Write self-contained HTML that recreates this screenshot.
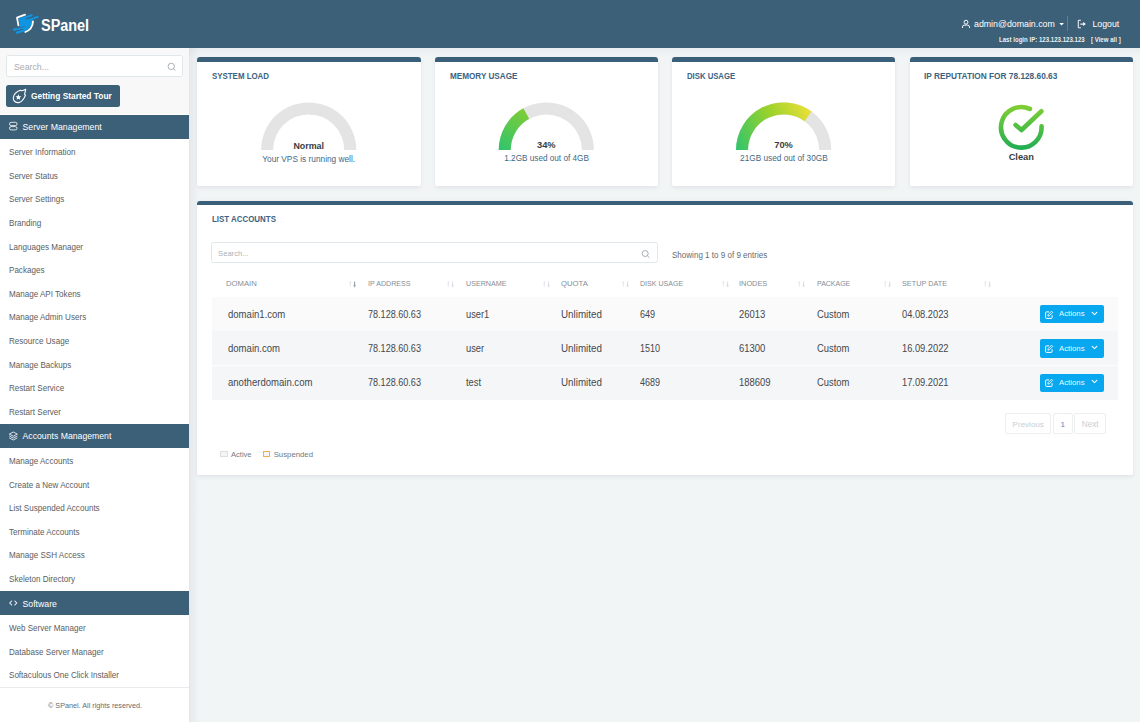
<!DOCTYPE html>
<html><head><meta charset="utf-8">
<style>
*{box-sizing:border-box;margin:0;padding:0}
html,body{width:1140px;height:722px;overflow:hidden}
body{position:relative;background:#f2f5f6;font-family:"Liberation Sans",sans-serif;color:#555}
.a{position:absolute}
.t{position:absolute;line-height:1;white-space:nowrap}
svg{position:absolute;overflow:visible}
</style></head><body>

<div class="a" style="left:189px;top:47.8px;width:951px;height:9px;background:linear-gradient(rgba(0,20,40,.035),rgba(0,20,40,0))"></div>
<div class="a" style="left:0;top:0;width:1140px;height:47.8px;background:#3d6079"></div>
<svg style="left:0;top:0" width="60" height="48" viewBox="0 0 60 48">
<path d="M19 19.5 L25.8 17.2 L26 19.9 L32.8 18.5 L32.4 22 Q30.8 28.5 25.6 30.6 L19.8 27 Z" fill="#0f95e2"/>
<path d="M19.5 19.3 L31.6 15.3" stroke="#0f95e2" stroke-width="2.2" stroke-linecap="round"/>
<path d="M26.5 20 L37.6 17" stroke="#0f95e2" stroke-width="2.2" stroke-linecap="round"/>
<path d="M26 19.2 L33.5 17.3" stroke="#3d6079" stroke-width="0.6"/>
<path d="M14 29.6 L25.3 27" stroke="#0f95e2" stroke-width="2.2" stroke-linecap="round"/>
<path d="M17 32.6 L26 29.9" stroke="#0f95e2" stroke-width="2.2" stroke-linecap="round"/>
<path d="M16.2 28.3 L24.8 26.3" stroke="#3d6079" stroke-width="0.6"/>
<path d="M25.1 14.7 L17 17.6 L18.4 25.4" stroke="#fff" stroke-width="1.8" fill="none" stroke-linecap="round" stroke-linejoin="round"/>
<path d="M33 21.5 Q32.6 29.3 25.3 32" stroke="#fff" stroke-width="1.8" fill="none" stroke-linecap="round"/>
</svg>
<div class="t" style="left:40.60px;top:18.00px;font-size:16.8px;color:#fff;font-weight:bold;transform:scaleX(0.86);transform-origin:0 0">SPanel</div>
<svg style="left:956px;top:14px" width="20" height="20" viewBox="0 0 20 20"><circle cx="10" cy="8.2" r="1.95" stroke="#fff" stroke-width="0.95" fill="none"/><path d="M6.5 13.6 L6.5 12.9 Q6.5 11.1 8.4 11.1 L11.6 11.1 Q13.5 11.1 13.5 12.9 L13.5 13.6" stroke="#fff" stroke-width="0.95" fill="none" stroke-linecap="round"/></svg>
<div class="t" style="left:974.00px;top:20.00px;font-size:8.8px;color:#fff;">admin@domain.com</div>
<svg style="left:1055px;top:14px" width="40" height="20" viewBox="0 0 40 20"><path d="M4.3 8.9 L8.9 8.9 L6.6 11.6 Z" fill="#fff"/><path d="M25.9 6.3 L23.3 6.3 L23.3 13.8 L25.9 13.8" stroke="#fff" stroke-width="0.95" fill="none"/><path d="M25.3 10.1 L28.8 10.1" stroke="#fff" stroke-width="1.1"/><path d="M28.2 8.1 L30.9 10.1 L28.2 12.1 Z" fill="#fff"/></svg>
<div class="a" style="left:1067.1px;top:16.1px;width:1px;height:15.4px;background:rgba(255,255,255,.2)"></div>
<div class="t" style="left:1092.50px;top:20.00px;font-size:8.75px;color:#fff;">Logout</div>
<div class="t" style="left:999.40px;top:37.00px;font-size:6.3px;color:rgba(255,255,255,.92);font-weight:bold;transform:scaleX(0.968);transform-origin:0 0">Last login IP: 123.123.123.123</div>
<div class="t" style="left:1090.60px;top:37.00px;font-size:6.3px;color:rgba(255,255,255,.92);font-weight:bold;transform:scaleX(0.968);transform-origin:0 0">[ View all ]</div>
<div class="a" style="left:0;top:47.8px;width:189.2px;height:674.2px;background:#fff"></div>
<div class="a" style="left:0;top:47.8px;width:189.2px;height:66.7px;background:#f8f8f8"></div>
<div class="a" style="left:189.2px;top:47.8px;width:10px;height:674.2px;background:linear-gradient(90deg,rgba(0,20,40,.065),rgba(0,20,40,.045) 20%,rgba(0,20,40,.02) 70%,rgba(0,20,40,0))"></div>
<div class="a" style="left:6px;top:55.3px;width:177px;height:22.1px;background:#fff;border:1px solid #e1e8ec;border-radius:2.5px"></div>
<div class="t" style="left:14.10px;top:63.00px;font-size:9.3px;color:#a8abb0;transform:scaleX(0.9405);transform-origin:0 0;">Search...</div>
<svg style="left:166px;top:62px" width="11" height="11" viewBox="0 0 11 11">
<circle cx="5.3" cy="4.4" r="3.2" stroke="#a3a8ae" stroke-width="0.9" fill="none"/>
<path d="M7.6 6.7 L9.1 8.3" stroke="#a3a8ae" stroke-width="0.9" stroke-linecap="round"/>
</svg>
<div class="a" style="left:5.9px;top:85.1px;width:113.8px;height:21.5px;background:#3d6079;border-radius:2.5px"></div>
<svg style="left:8px;top:86px" width="22" height="20" viewBox="0 0 22 20"><path d="M17.7 3.3 C 16 4.1 14.9 4.5 13.8 4.7 L 12.2 4.2 C 9 5.4 5.7 8 5.3 11.8 C 5 15.3 7.8 16.7 10.4 16.6 C 12.9 16.5 14.6 14.6 16.1 12 L 17.5 9.3 L 16.6 8.3 Z" stroke="#fff" stroke-width="1.1" fill="none" stroke-linejoin="round"/><path d="M10.40 8.25 L11.19 10.21 L13.30 10.36 L11.68 11.72 L12.19 13.77 L10.40 12.65 L8.61 13.77 L9.12 11.72 L7.50 10.36 L9.61 10.21 Z" fill="#fff"/></svg>
<div class="t" style="left:31.00px;top:92.00px;font-size:8.4px;color:#fff;font-weight:bold;">Getting Started Tour</div>
<div class="a" style="left:0;top:114.5px;width:189.2px;height:24.50px;background:#3d6079"></div>
<div class="t" style="left:22.50px;top:123.00px;font-size:8.75px;color:#fff;">Server Management</div>
<svg style="left:8px;top:121.15px" width="11" height="10" viewBox="0 0 11 10"><rect x="1.5" y="1.3" width="7.5" height="3.3" rx="1.6" stroke="rgba(255,255,255,.85)" stroke-width="0.95" fill="none"/><rect x="1.5" y="5.6" width="7.5" height="3.3" rx="1.6" stroke="rgba(255,255,255,.85)" stroke-width="0.95" fill="none"/></svg>
<div class="a" style="left:0;top:423.8px;width:189.2px;height:24.10px;background:#3d6079"></div>
<div class="t" style="left:22.50px;top:432.00px;font-size:8.7px;color:#fff;">Accounts Management</div>
<svg style="left:8px;top:430.85px" width="11" height="10" viewBox="0 0 11 10"><path d="M5.3 1 L9.3 3.1 L5.3 5.2 L1.3 3.1 Z" stroke="#fff" stroke-width="0.8" fill="none" stroke-linejoin="round"/><path d="M1.3 5 L5.3 7.1 L9.3 5 M1.3 6.9 L5.3 9 L9.3 6.9" stroke="#fff" stroke-width="0.8" fill="none" stroke-linejoin="round"/></svg>
<div class="a" style="left:0;top:590.8px;width:189.2px;height:24.60px;background:#3d6079"></div>
<div class="t" style="left:22.50px;top:600.00px;font-size:8.72px;color:#fff;">Software</div>
<svg style="left:8px;top:598.10px" width="11" height="10" viewBox="0 0 11 10"><path d="M3.7 3 L1.7 5 L3.7 7 M6.8 3 L8.8 5 L6.8 7" stroke="#fff" stroke-width="1.05" fill="none" stroke-linecap="round" stroke-linejoin="round"/></svg>
<div class="t" style="left:8.90px;top:148.00px;font-size:8.65px;color:#5a5e62;transform:scaleX(0.9360);transform-origin:0 0;">Server Information</div>
<div class="t" style="left:8.90px;top:172.00px;font-size:8.65px;color:#5a5e62;transform:scaleX(0.9360);transform-origin:0 0;">Server Status</div>
<div class="t" style="left:8.90px;top:195.00px;font-size:8.65px;color:#5a5e62;transform:scaleX(0.9360);transform-origin:0 0;">Server Settings</div>
<div class="t" style="left:8.90px;top:219.00px;font-size:8.65px;color:#5a5e62;transform:scaleX(0.9360);transform-origin:0 0;">Branding</div>
<div class="t" style="left:8.90px;top:243.00px;font-size:8.65px;color:#5a5e62;transform:scaleX(0.9360);transform-origin:0 0;">Languages Manager</div>
<div class="t" style="left:8.90px;top:266.00px;font-size:8.65px;color:#5a5e62;transform:scaleX(0.9360);transform-origin:0 0;">Packages</div>
<div class="t" style="left:8.90px;top:290.00px;font-size:8.65px;color:#5a5e62;transform:scaleX(0.9360);transform-origin:0 0;">Manage API Tokens</div>
<div class="t" style="left:8.90px;top:313.00px;font-size:8.65px;color:#5a5e62;transform:scaleX(0.9360);transform-origin:0 0;">Manage Admin Users</div>
<div class="t" style="left:8.90px;top:337.00px;font-size:8.65px;color:#5a5e62;transform:scaleX(0.9360);transform-origin:0 0;">Resource Usage</div>
<div class="t" style="left:8.90px;top:361.00px;font-size:8.65px;color:#5a5e62;transform:scaleX(0.9360);transform-origin:0 0;">Manage Backups</div>
<div class="t" style="left:8.90px;top:384.00px;font-size:8.65px;color:#5a5e62;transform:scaleX(0.9360);transform-origin:0 0;">Restart Service</div>
<div class="t" style="left:8.90px;top:408.00px;font-size:8.65px;color:#5a5e62;transform:scaleX(0.9360);transform-origin:0 0;">Restart Server</div>
<div class="t" style="left:8.90px;top:457.00px;font-size:8.65px;color:#5a5e62;transform:scaleX(0.9360);transform-origin:0 0;">Manage Accounts</div>
<div class="t" style="left:8.90px;top:481.00px;font-size:8.65px;color:#5a5e62;transform:scaleX(0.9360);transform-origin:0 0;">Create a New Account</div>
<div class="t" style="left:8.90px;top:504.00px;font-size:8.65px;color:#5a5e62;transform:scaleX(0.9360);transform-origin:0 0;">List Suspended Accounts</div>
<div class="t" style="left:8.90px;top:528.00px;font-size:8.65px;color:#5a5e62;transform:scaleX(0.9360);transform-origin:0 0;">Terminate Accounts</div>
<div class="t" style="left:8.90px;top:551.00px;font-size:8.65px;color:#5a5e62;transform:scaleX(0.9360);transform-origin:0 0;">Manage SSH Access</div>
<div class="t" style="left:8.90px;top:575.00px;font-size:8.65px;color:#5a5e62;transform:scaleX(0.9360);transform-origin:0 0;">Skeleton Directory</div>
<div class="t" style="left:8.90px;top:624.00px;font-size:8.65px;color:#5a5e62;transform:scaleX(0.9360);transform-origin:0 0;">Web Server Manager</div>
<div class="t" style="left:8.90px;top:648.00px;font-size:8.65px;color:#5a5e62;transform:scaleX(0.9360);transform-origin:0 0;">Database Server Manager</div>
<div class="t" style="left:8.90px;top:671.00px;font-size:8.65px;color:#5a5e62;transform:scaleX(0.9360);transform-origin:0 0;">Softaculous One Click Installer</div>
<div class="a" style="left:0;top:686.8px;width:189.2px;height:1px;background:#e8eaee"></div>
<div class="t" style="left:-55.25px;width:300px;text-align:center;top:702.00px;font-size:7.8px;color:#666a6e;transform:scaleX(0.925);transform-origin:50% 0">© SPanel. All rights reserved.</div>
<div class="a" style="left:197px;top:57.2px;width:223.50px;height:129.10px;background:#fff;border-radius:3px 3px 2px 2px;box-shadow:0 1.5px 4px rgba(0,20,40,.07)"></div>
<div class="a" style="left:197px;top:57.2px;width:223.50px;height:4.8px;background:#3a5f79;border-radius:3px 3px 0 0"></div>
<div class="t" style="left:211.70px;top:72.00px;font-size:8.7px;color:#3b6381;font-weight:bold;transform:scaleX(0.9087);transform-origin:0 0;">SYSTEM LOAD</div>
<div class="a" style="left:434.9px;top:57.2px;width:222.90px;height:129.10px;background:#fff;border-radius:3px 3px 2px 2px;box-shadow:0 1.5px 4px rgba(0,20,40,.07)"></div>
<div class="a" style="left:434.9px;top:57.2px;width:222.90px;height:4.8px;background:#3a5f79;border-radius:3px 3px 0 0"></div>
<div class="t" style="left:449.60px;top:72.00px;font-size:8.7px;color:#3b6381;font-weight:bold;transform:scaleX(0.9372);transform-origin:0 0;">MEMORY USAGE</div>
<div class="a" style="left:672.1px;top:57.2px;width:223.10px;height:129.10px;background:#fff;border-radius:3px 3px 2px 2px;box-shadow:0 1.5px 4px rgba(0,20,40,.07)"></div>
<div class="a" style="left:672.1px;top:57.2px;width:223.10px;height:4.8px;background:#3a5f79;border-radius:3px 3px 0 0"></div>
<div class="t" style="left:686.80px;top:72.00px;font-size:8.7px;color:#3b6381;font-weight:bold;transform:scaleX(0.8902);transform-origin:0 0;">DISK USAGE</div>
<div class="a" style="left:909.7px;top:57.2px;width:222.90px;height:129.10px;background:#fff;border-radius:3px 3px 2px 2px;box-shadow:0 1.5px 4px rgba(0,20,40,.07)"></div>
<div class="a" style="left:909.7px;top:57.2px;width:222.90px;height:4.8px;background:#3a5f79;border-radius:3px 3px 0 0"></div>
<div class="t" style="left:924.40px;top:72.00px;font-size:8.7px;color:#3b6381;font-weight:bold;transform:scaleX(0.9554);transform-origin:0 0;">IP REPUTATION FOR 78.128.60.63</div>
<svg style="left:0;top:0" width="1140" height="200" viewBox="0 0 1140 200"><path d="M261.10 150.00 A47.6 47.6 0 0 1 356.30 150.00 L344.30 150.00 A35.6 35.6 0 0 0 273.10 150.00 Z" fill="#e4e4e4"/></svg>
<svg style="left:0;top:0" width="1140" height="200" viewBox="0 0 1140 200"><path d="M498.70 150.00 A47.6 47.6 0 0 1 593.90 150.00 L581.90 150.00 A35.6 35.6 0 0 0 510.70 150.00 Z" fill="#e4e4e4"/><defs><linearGradient id="g2" gradientUnits="userSpaceOnUse" x1="498.69999999999993" y1="150.0" x2="523.3685251127583" y2="108.28780202991209"><stop offset="0" stop-color="#2fc46e"/><stop offset="1" stop-color="#7fcd35"/></linearGradient></defs><path d="M498.70 150.00 A47.6 47.6 0 0 1 523.37 108.29 L529.15 118.80 A35.6 35.6 0 0 0 510.70 150.00 Z" fill="url(#g2)"/></svg>
<svg style="left:0;top:0" width="1140" height="200" viewBox="0 0 1140 200"><path d="M736.00 150.00 A47.6 47.6 0 0 1 831.20 150.00 L819.20 150.00 A35.6 35.6 0 0 0 748.00 150.00 Z" fill="#e4e4e4"/><defs><linearGradient id="g3" gradientUnits="userSpaceOnUse" x1="736.0" y1="150.0" x2="811.5785780091218" y2="111.4907910677525"><stop offset="0" stop-color="#2fc46e"/><stop offset="0.55" stop-color="#9ad22a"/><stop offset="1" stop-color="#ece03a"/></linearGradient></defs><path d="M736.00 150.00 A47.6 47.6 0 0 1 811.58 111.49 L804.53 121.20 A35.6 35.6 0 0 0 748.00 150.00 Z" fill="url(#g3)"/></svg>
<div class="t" style="left:158.70px;width:300px;text-align:center;top:142.00px;font-size:8.9px;color:#3a3d40;font-weight:bold;">Normal</div>
<div class="t" style="left:158.70px;width:300px;text-align:center;top:155.00px;font-size:8.3px;color:#416885;">Your VPS is running well.</div>
<div class="t" style="left:396.30px;width:300px;text-align:center;top:141.00px;font-size:9.3px;color:#3a3d40;font-weight:bold;">34%</div>
<div class="t" style="left:396.60px;width:300px;text-align:center;top:155.00px;font-size:8.2px;color:#416885;">1.2GB used out of 4GB</div>
<div class="t" style="left:633.60px;width:300px;text-align:center;top:141.00px;font-size:9.3px;color:#3a3d40;font-weight:bold;">70%</div>
<div class="t" style="left:633.90px;width:300px;text-align:center;top:155.00px;font-size:8.25px;color:#416885;">21GB used out of 30GB</div>
<svg style="left:990px;top:98px" width="62" height="60" viewBox="0 0 62 60">
<defs><linearGradient id="gc" x1="0" y1="0" x2="0" y2="1"><stop offset="0" stop-color="#82cf32"/><stop offset="1" stop-color="#1fad55"/></linearGradient>
<linearGradient id="gc2" gradientUnits="userSpaceOnUse" x1="0" y1="7" x2="0" y2="52"><stop offset="0" stop-color="#82cf32"/><stop offset="1" stop-color="#1fad55"/></linearGradient></defs>
<path d="M39.88 10.95 A20.3 20.3 0 1 0 51.57 28.29" stroke="url(#gc2)" stroke-width="4.6" fill="none" stroke-linecap="round"/>
<path d="M25.6 27.0 L31.5 32.0 L51.4 13.3" stroke="url(#gc2)" stroke-width="4.6" fill="none" stroke-linecap="round" stroke-linejoin="round"/>
</svg>
<div class="t" style="left:871.30px;width:300px;text-align:center;top:153.00px;font-size:9.3px;color:#3a3d40;font-weight:bold;">Clean</div>
<div class="a" style="left:197px;top:200.8px;width:935.60px;height:274.20px;background:#fff;border-radius:3px 3px 2px 2px;box-shadow:0 1.5px 4px rgba(0,20,40,.07)"></div>
<div class="a" style="left:197px;top:200.8px;width:935.60px;height:4.5px;background:#3a5f79;border-radius:3px 3px 0 0"></div>
<div class="t" style="left:211.90px;top:215.00px;font-size:8.7px;color:#3b6381;font-weight:bold;transform:scaleX(0.9111);transform-origin:0 0;">LIST ACCOUNTS</div>
<div class="a" style="left:211.1px;top:242.3px;width:447.2px;height:20.6px;background:#fff;border:1px solid #e1e8ec;border-radius:2.5px"></div>
<div class="t" style="left:218.10px;top:250.00px;font-size:7.6px;color:#adb0b4;">Search...</div>
<svg style="left:640px;top:249px" width="11" height="10" viewBox="0 0 11 10">
<circle cx="5.2" cy="4.5" r="3" stroke="#9aa0a6" stroke-width="0.85" fill="none"/>
<path d="M7.4 6.7 L9.2 8.5" stroke="#9aa0a6" stroke-width="0.85" stroke-linecap="round"/>
</svg>
<div class="t" style="left:672.00px;top:251.00px;font-size:8.9px;color:#666b70;transform:scaleX(0.9063);transform-origin:0 0;">Showing 1 to 9 of 9 entries</div>
<div class="t" style="left:226.00px;top:280.00px;font-size:7.8px;color:#858e96;transform:scaleX(0.9872);transform-origin:0 0;">DOMAIN</div>
<div class="t" style="left:367.60px;top:280.00px;font-size:7.8px;color:#858e96;transform:scaleX(0.9127);transform-origin:0 0;">IP ADDRESS</div>
<div class="t" style="left:465.80px;top:280.00px;font-size:7.8px;color:#858e96;transform:scaleX(0.9161);transform-origin:0 0;">USERNAME</div>
<div class="t" style="left:560.50px;top:280.00px;font-size:7.8px;color:#858e96;transform:scaleX(0.9906);transform-origin:0 0;">QUOTA</div>
<div class="t" style="left:640.00px;top:280.00px;font-size:7.8px;color:#858e96;transform:scaleX(0.9081);transform-origin:0 0;">DISK USAGE</div>
<div class="t" style="left:739.30px;top:280.00px;font-size:7.8px;color:#858e96;transform:scaleX(0.9463);transform-origin:0 0;">INODES</div>
<div class="t" style="left:816.70px;top:280.00px;font-size:7.8px;color:#858e96;transform:scaleX(0.8967);transform-origin:0 0;">PACKAGE</div>
<div class="t" style="left:901.70px;top:280.00px;font-size:7.8px;color:#858e96;transform:scaleX(0.9325);transform-origin:0 0;">SETUP DATE</div>
<svg style="left:349.10px;top:281px" width="8" height="7" viewBox="0 0 8 7"><path d="M1.3 5.7 L1.3 0.9 M0.3 1.4 L1.3 0.6 L2.3 1.4" stroke="#dde1e5" stroke-width="0.8" fill="none"/><path d="M5.6 0.6 L5.6 5.1 M4.5 4.7 L5.6 5.7 L6.7 4.7" stroke="#7c8a95" stroke-width="0.9" fill="none"/></svg>
<svg style="left:447.20px;top:281px" width="8" height="7" viewBox="0 0 8 7"><path d="M1.3 5.7 L1.3 0.9 M0.3 1.4 L1.3 0.6 L2.3 1.4" stroke="#dde1e5" stroke-width="0.8" fill="none"/><path d="M5.6 0.6 L5.6 5.1 M4.5 4.7 L5.6 5.7 L6.7 4.7" stroke="#d3d8dc" stroke-width="0.9" fill="none"/></svg>
<svg style="left:542.60px;top:281px" width="8" height="7" viewBox="0 0 8 7"><path d="M1.3 5.7 L1.3 0.9 M0.3 1.4 L1.3 0.6 L2.3 1.4" stroke="#dde1e5" stroke-width="0.8" fill="none"/><path d="M5.6 0.6 L5.6 5.1 M4.5 4.7 L5.6 5.7 L6.7 4.7" stroke="#d3d8dc" stroke-width="0.9" fill="none"/></svg>
<svg style="left:621.60px;top:281px" width="8" height="7" viewBox="0 0 8 7"><path d="M1.3 5.7 L1.3 0.9 M0.3 1.4 L1.3 0.6 L2.3 1.4" stroke="#dde1e5" stroke-width="0.8" fill="none"/><path d="M5.6 0.6 L5.6 5.1 M4.5 4.7 L5.6 5.7 L6.7 4.7" stroke="#d3d8dc" stroke-width="0.9" fill="none"/></svg>
<svg style="left:721.70px;top:281px" width="8" height="7" viewBox="0 0 8 7"><path d="M1.3 5.7 L1.3 0.9 M0.3 1.4 L1.3 0.6 L2.3 1.4" stroke="#dde1e5" stroke-width="0.8" fill="none"/><path d="M5.6 0.6 L5.6 5.1 M4.5 4.7 L5.6 5.7 L6.7 4.7" stroke="#d3d8dc" stroke-width="0.9" fill="none"/></svg>
<svg style="left:798.00px;top:281px" width="8" height="7" viewBox="0 0 8 7"><path d="M1.3 5.7 L1.3 0.9 M0.3 1.4 L1.3 0.6 L2.3 1.4" stroke="#dde1e5" stroke-width="0.8" fill="none"/><path d="M5.6 0.6 L5.6 5.1 M4.5 4.7 L5.6 5.7 L6.7 4.7" stroke="#d3d8dc" stroke-width="0.9" fill="none"/></svg>
<svg style="left:884.00px;top:281px" width="8" height="7" viewBox="0 0 8 7"><path d="M1.3 5.7 L1.3 0.9 M0.3 1.4 L1.3 0.6 L2.3 1.4" stroke="#dde1e5" stroke-width="0.8" fill="none"/><path d="M5.6 0.6 L5.6 5.1 M4.5 4.7 L5.6 5.7 L6.7 4.7" stroke="#d3d8dc" stroke-width="0.9" fill="none"/></svg>
<svg style="left:984.00px;top:281px" width="8" height="7" viewBox="0 0 8 7"><path d="M1.3 5.7 L1.3 0.9 M0.3 1.4 L1.3 0.6 L2.3 1.4" stroke="#dde1e5" stroke-width="0.8" fill="none"/><path d="M5.6 0.6 L5.6 5.1 M4.5 4.7 L5.6 5.7 L6.7 4.7" stroke="#d3d8dc" stroke-width="0.9" fill="none"/></svg>
<div class="a" style="left:211.5px;top:297.0px;width:906.9px;height:34.30px;background:#fafafa"></div>
<div class="t" style="left:227.90px;top:310.00px;font-size:10.0px;color:#44484c;transform:scaleX(0.9550);transform-origin:0 0;">domain1.com</div>
<div class="t" style="left:367.70px;top:310.00px;font-size:10.0px;color:#44484c;transform:scaleX(0.9070);transform-origin:0 0;">78.128.60.63</div>
<div class="t" style="left:465.80px;top:310.00px;font-size:10.0px;color:#44484c;transform:scaleX(0.9300);transform-origin:0 0;">user1</div>
<div class="t" style="left:560.50px;top:310.00px;font-size:10.0px;color:#44484c;transform:scaleX(0.9800);transform-origin:0 0;">Unlimited</div>
<div class="t" style="left:639.90px;top:310.00px;font-size:10.0px;color:#44484c;transform:scaleX(0.9000);transform-origin:0 0;">649</div>
<div class="t" style="left:739.30px;top:310.00px;font-size:10.0px;color:#44484c;transform:scaleX(0.9460);transform-origin:0 0;">26013</div>
<div class="t" style="left:816.70px;top:310.00px;font-size:10.0px;color:#44484c;transform:scaleX(0.9400);transform-origin:0 0;">Custom</div>
<div class="t" style="left:901.70px;top:310.00px;font-size:10.0px;color:#44484c;transform:scaleX(0.9300);transform-origin:0 0;">04.08.2023</div>
<div class="a" style="left:1040px;top:305.00px;width:64px;height:18.4px;background:#08a8f1;border-radius:2px"></div>
<svg style="left:1044.3px;top:309.50px" width="10" height="10" viewBox="0 0 10 10"><path d="M5 1.9 L2.5 1.9 Q1.6 1.9 1.6 2.8 L1.6 7.5 Q1.6 8.4 2.5 8.4 L7.2 8.4 Q8.1 8.4 8.1 7.5 L8.1 5.2" stroke="#fff" stroke-width="1" fill="none"/><path d="M7.5 1.2 L8.7 2.4 L5.3 5.8 L3.9 6.1 L4.2 4.6 Z" stroke="#fff" stroke-width="0.85" fill="none" stroke-linejoin="round"/></svg>
<div class="t" style="left:1059.00px;top:310.00px;font-size:7.8px;color:rgba(255,255,255,.95);">Actions</div>
<svg style="left:1091px;top:310.80px" width="7" height="5" viewBox="0 0 7 5"><path d="M1.2 1.3 L3.5 3.6 L5.8 1.3" stroke="#fff" stroke-width="1.1" fill="none" stroke-linecap="round" stroke-linejoin="round"/></svg>
<div class="a" style="left:211.5px;top:331.3px;width:906.9px;height:34.20px;background:#f5f6f8"></div>
<div class="t" style="left:227.90px;top:344.00px;font-size:10.0px;color:#44484c;transform:scaleX(0.9550);transform-origin:0 0;">domain.com</div>
<div class="t" style="left:367.70px;top:344.00px;font-size:10.0px;color:#44484c;transform:scaleX(0.9070);transform-origin:0 0;">78.128.60.63</div>
<div class="t" style="left:465.80px;top:344.00px;font-size:10.0px;color:#44484c;transform:scaleX(0.9300);transform-origin:0 0;">user</div>
<div class="t" style="left:560.50px;top:344.00px;font-size:10.0px;color:#44484c;transform:scaleX(0.9800);transform-origin:0 0;">Unlimited</div>
<div class="t" style="left:639.90px;top:344.00px;font-size:10.0px;color:#44484c;transform:scaleX(0.9000);transform-origin:0 0;">1510</div>
<div class="t" style="left:739.30px;top:344.00px;font-size:10.0px;color:#44484c;transform:scaleX(0.9460);transform-origin:0 0;">61300</div>
<div class="t" style="left:816.70px;top:344.00px;font-size:10.0px;color:#44484c;transform:scaleX(0.9400);transform-origin:0 0;">Custom</div>
<div class="t" style="left:901.70px;top:344.00px;font-size:10.0px;color:#44484c;transform:scaleX(0.9300);transform-origin:0 0;">16.09.2022</div>
<div class="a" style="left:1040px;top:339.30px;width:64px;height:18.4px;background:#08a8f1;border-radius:2px"></div>
<svg style="left:1044.3px;top:343.80px" width="10" height="10" viewBox="0 0 10 10"><path d="M5 1.9 L2.5 1.9 Q1.6 1.9 1.6 2.8 L1.6 7.5 Q1.6 8.4 2.5 8.4 L7.2 8.4 Q8.1 8.4 8.1 7.5 L8.1 5.2" stroke="#fff" stroke-width="1" fill="none"/><path d="M7.5 1.2 L8.7 2.4 L5.3 5.8 L3.9 6.1 L4.2 4.6 Z" stroke="#fff" stroke-width="0.85" fill="none" stroke-linejoin="round"/></svg>
<div class="t" style="left:1059.00px;top:345.00px;font-size:7.8px;color:rgba(255,255,255,.95);">Actions</div>
<svg style="left:1091px;top:345.10px" width="7" height="5" viewBox="0 0 7 5"><path d="M1.2 1.3 L3.5 3.6 L5.8 1.3" stroke="#fff" stroke-width="1.1" fill="none" stroke-linecap="round" stroke-linejoin="round"/></svg>
<div class="a" style="left:211.5px;top:365.5px;width:906.9px;height:34.10px;background:#f5f6f8"></div>
<div class="a" style="left:211.5px;top:365.0px;width:906.9px;height:1px;background:#fdfdfe"></div>
<div class="t" style="left:227.90px;top:378.00px;font-size:10.0px;color:#44484c;transform:scaleX(0.9550);transform-origin:0 0;">anotherdomain.com</div>
<div class="t" style="left:367.70px;top:378.00px;font-size:10.0px;color:#44484c;transform:scaleX(0.9070);transform-origin:0 0;">78.128.60.63</div>
<div class="t" style="left:465.80px;top:378.00px;font-size:10.0px;color:#44484c;transform:scaleX(0.9300);transform-origin:0 0;">test</div>
<div class="t" style="left:560.50px;top:378.00px;font-size:10.0px;color:#44484c;transform:scaleX(0.9800);transform-origin:0 0;">Unlimited</div>
<div class="t" style="left:639.90px;top:378.00px;font-size:10.0px;color:#44484c;transform:scaleX(0.9000);transform-origin:0 0;">4689</div>
<div class="t" style="left:739.30px;top:378.00px;font-size:10.0px;color:#44484c;transform:scaleX(0.9460);transform-origin:0 0;">188609</div>
<div class="t" style="left:816.70px;top:378.00px;font-size:10.0px;color:#44484c;transform:scaleX(0.9400);transform-origin:0 0;">Custom</div>
<div class="t" style="left:901.70px;top:378.00px;font-size:10.0px;color:#44484c;transform:scaleX(0.9300);transform-origin:0 0;">17.09.2021</div>
<div class="a" style="left:1040px;top:373.50px;width:64px;height:18.4px;background:#08a8f1;border-radius:2px"></div>
<svg style="left:1044.3px;top:378.00px" width="10" height="10" viewBox="0 0 10 10"><path d="M5 1.9 L2.5 1.9 Q1.6 1.9 1.6 2.8 L1.6 7.5 Q1.6 8.4 2.5 8.4 L7.2 8.4 Q8.1 8.4 8.1 7.5 L8.1 5.2" stroke="#fff" stroke-width="1" fill="none"/><path d="M7.5 1.2 L8.7 2.4 L5.3 5.8 L3.9 6.1 L4.2 4.6 Z" stroke="#fff" stroke-width="0.85" fill="none" stroke-linejoin="round"/></svg>
<div class="t" style="left:1059.00px;top:379.00px;font-size:7.8px;color:rgba(255,255,255,.95);">Actions</div>
<svg style="left:1091px;top:379.30px" width="7" height="5" viewBox="0 0 7 5"><path d="M1.2 1.3 L3.5 3.6 L5.8 1.3" stroke="#fff" stroke-width="1.1" fill="none" stroke-linecap="round" stroke-linejoin="round"/></svg>
<div class="a" style="left:1005px;top:413.3px;width:45.90px;height:20.4px;background:#fff;border:1px solid #eceef0;border-radius:2px"></div>
<div class="t" style="left:1012.60px;top:421.00px;font-size:8.04px;color:#c9ced4;">Previous</div>
<div class="a" style="left:1052.7px;top:413.3px;width:19.90px;height:20.4px;background:#fff;border:1px solid #eceef0;border-radius:2px"></div>
<div class="t" style="left:1060.40px;top:421.00px;font-size:8.1px;color:#5b7fd0;">1</div>
<div class="a" style="left:1074.3px;top:413.3px;width:32.00px;height:20.4px;background:#fff;border:1px solid #eceef0;border-radius:2px"></div>
<div class="t" style="left:1081.80px;top:421.00px;font-size:8.17px;color:#c9ced4;">Next</div>
<div class="a" style="left:220.2px;top:451px;width:7.5px;height:6px;background:#f3f5f7;border:0.8px solid #dcdfe2"></div>
<div class="t" style="left:231.00px;top:451.00px;font-size:7.56px;color:#6f7b85;">Active</div>
<div class="a" style="left:263px;top:451px;width:7.2px;height:6px;background:#f3f5f7;border:0.9px solid #f5ad4f"></div>
<div class="t" style="left:273.70px;top:451.00px;font-size:7.77px;color:#6f7b85;">Suspended</div>
</body></html>
